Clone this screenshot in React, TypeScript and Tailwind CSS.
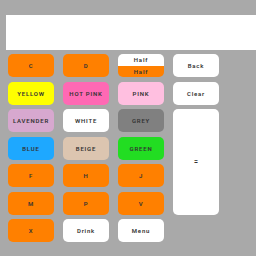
import React from 'react';

type Key = { label: string; bg: string; text?: string };

const rows: (Key | null)[][] = [
    [{ label: 'C', bg: 'bg-[#ff8000]' }, { label: 'D', bg: 'bg-[#ff8000]' }, null, { label: 'Back', bg: 'bg-white' }],
    [{ label: 'YELLOW', bg: 'bg-[#ffff00]' }, { label: 'HOT PINK', bg: 'bg-[#ff69b4]' }, { label: 'PINK', bg: 'bg-[#ffbfe0]' }, { label: 'Clear', bg: 'bg-white' }],
    [{ label: 'LAVENDER', bg: 'bg-[#d7a8cf]' }, { label: 'WHITE', bg: 'bg-white' }, { label: 'GREY', bg: 'bg-[#808080]' }],
    [{ label: 'BLUE', bg: 'bg-[#1ea8ff]' }, { label: 'BEIGE', bg: 'bg-[#dcc5b0]' }, { label: 'GREEN', bg: 'bg-[#22dd22]' }],
    [{ label: 'F', bg: 'bg-[#ff8000]' }, { label: 'H', bg: 'bg-[#ff8000]' }, { label: 'J', bg: 'bg-[#ff8000]' }],
    [{ label: 'M', bg: 'bg-[#ff8000]' }, { label: 'P', bg: 'bg-[#ff8000]' }, { label: 'V', bg: 'bg-[#ff8000]' }],
    [{ label: 'X', bg: 'bg-[#ff8000]' }, { label: 'Drink', bg: 'bg-white' }, { label: 'Menu', bg: 'bg-white' }],
];

const KeyButton: React.FC<{ k: Key }> = ({ k }) => (
    <button className={`${k.bg} rounded-[5px] flex items-center justify-center text-[6px] font-semibold tracking-[0.8px] text-[#333]`}>
        {k.label}
    </button>
);

export default function App() {
    return (
        <div className="w-[256px] h-[256px] bg-[#a9a9a9] overflow-hidden" style={{ fontFamily: 'Roboto, "Liberation Sans", sans-serif' }}>
            <div className="pt-[15px] pl-[6px]">
                <div className="bg-white h-[35px] w-full" />
            </div>
            <div className="mt-[4px] ml-[8px] grid grid-cols-[46px_46px_46px_46px] grid-rows-[23px_23px_23px_23px_23px_23px_23px] gap-x-[9px] gap-y-[4.5px]">
                {rows.map((row, r) =>
                    row.map((k, c) => {
                        if (r === 0 && c === 2) {
                            return (
                                <div key={`${r}-${c}`} className="rounded-[5px] overflow-hidden flex flex-col text-[6px] font-semibold tracking-[0.8px] text-[#333]">
                                    <div className="flex-1 bg-white flex items-center justify-center">Half</div>
                                    <div className="flex-1 bg-[#ff8000] flex items-center justify-center">Half</div>
                                </div>
                            );
                        }
                        return k ? <KeyButton key={`${r}-${c}`} k={k} /> : null;
                    })
                )}
                <button className="col-start-4 row-start-3 row-span-4 bg-white rounded-[5px] flex items-center justify-center text-[7px] font-semibold text-[#333]">
                    =
                </button>
            </div>
        </div>
    );
}
